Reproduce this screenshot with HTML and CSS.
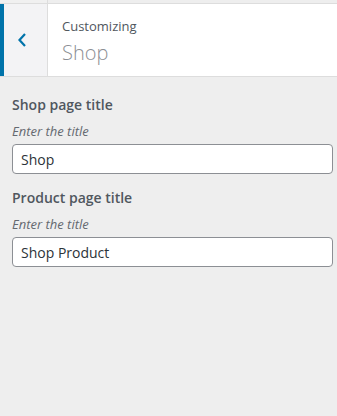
FILE: index.html
```html
<!DOCTYPE html>
<html>
<head>
  <title>Customizing Shop</title>
  <link rel="stylesheet" href="styles.css">
</head>
<body>
  <div class="strip"><span class="strip-left"></span></div>
  <div class="panel-head">
    <button class="back" aria-label="Back">
      <svg width="10" height="14" viewBox="0 0 10 14"><path d="M8 1 L2.5 7 L8 13" fill="none" stroke="#0073aa" stroke-width="2.2"/></svg>
    </button>
    <div class="head-title">
      <span class="action">Customizing</span>
      <h3>Shop</h3>
    </div>
  </div>

  <div class="controls">
    <div class="control">
      <label class="control-title" for="shop-title">Shop page title</label>
      <span class="description">Enter the title</span>
      <input type="text" id="shop-title" value="Shop">
    </div>
    <div class="control">
      <label class="control-title" for="product-title">Product page title</label>
      <span class="description">Enter the title</span>
      <input type="text" id="product-title" value="Shop Product">
    </div>
  </div>
</body>
</html>
```

FILE: styles.css
```css
body { margin: 0; background: #eee; font-family: "Open Sans", "Noto Sans", sans-serif; color: #50575e; }
.strip { height: 3px; border-bottom: 1px solid #ddd; display: flex; }
.strip-left { width: 47px; border-right: 1px solid #ddd; background: #f0f0f0; }
.panel-head {
  display: flex;
  height: 72px;
  background: #fff;
  border-bottom: 1px solid #ddd;
}
.back {
  width: 48px;
  border: 0;
  border-left: 4px solid #0073aa;
  border-right: 1px solid #ddd;
  background: #f3f3f5;
  padding: 0 8px 0 0;
  display: flex; align-items: center; justify-content: center;
  cursor: pointer;
}
.head-title { padding: 13px 0 0 14px; }
.action { display: block; font-size: 13px; line-height: 18px; color: #50575e; }
.head-title h3 {
  margin: 5px 0 0;
  font-size: 20px;
  line-height: 26px;
  font-weight: 300;
  color: #8c8f94;
}
.controls { padding: 16px 4px 0 12px; }
.control { display: flex; flex-direction: column; margin-bottom: 12px; }
.control-title { font-size: 14px; font-weight: 600; line-height: 24px; margin-bottom: 4px; color: #50575e; }
.description { font-size: 13px; font-style: italic; line-height: 20px; margin-bottom: 3px; color: #646970; }
.control input {
  box-sizing: border-box;
  height: 30px;
  width: 100%;
  padding: 0 8px;
  border: 1px solid #8c8f94;
  border-radius: 4px;
  font-family: inherit;
  font-size: 14px;
  color: #2c3338;
  background: #fff;
}
```
